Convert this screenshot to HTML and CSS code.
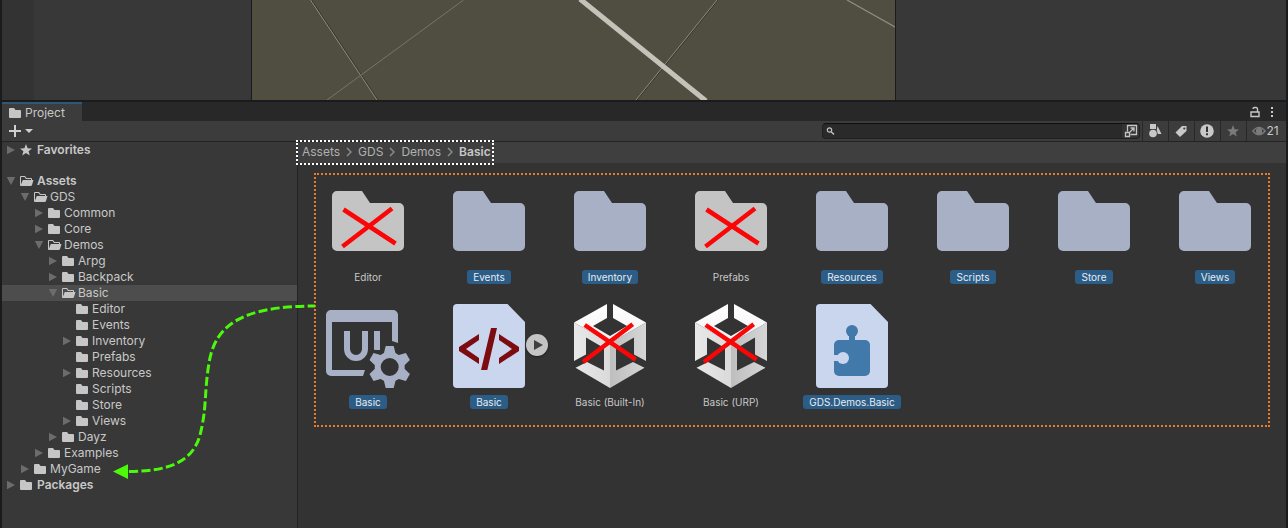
FILE: index.html
```html
<!DOCTYPE html>
<html lang="en">
<head>
<meta charset="utf-8">
<title>Project</title>
<link rel="stylesheet" href="styles.css">
</head>
<body>
<svg class="defs" aria-hidden="true">
  <defs>
    <linearGradient id="faceTop" x1="0" y1="0" x2="0" y2="1"><stop offset="0" stop-color="#fff"/><stop offset="1" stop-color="#f2f2f2"/></linearGradient>
    <linearGradient id="faceLeft" x1="0" y1="0" x2="1" y2="0"><stop offset="0" stop-color="#e8e8e8"/><stop offset="1" stop-color="#dadada"/></linearGradient>
    <linearGradient id="faceRight" x1="0" y1="0" x2="1" y2="0"><stop offset="0" stop-color="#bebebe"/><stop offset="1" stop-color="#d6d6d6"/></linearGradient>
  </defs>
  <symbol id="folder" viewBox="0 0 14 12"><path d="M0 2q0-1 1-1h4l1.500 2H11q1 0 1 1v6q0 1-1 1H1q-1 0-1-1z"/></symbol>
  <symbol id="folder-open" viewBox="0 0 14 12"><path d="M0 2q0-1 1-1h4l1.500 2H11q1 0 1 1v1h-1V4H6L4.500 2H1v7.500L2.800 5H13.500L12 10q-.300 1-1.300 1H1q-1 0-1-1z"/></symbol>
  <symbol id="closed" viewBox="0 0 10 10"><path d="M1 .8 9 5 1 9.200z"/></symbol>
  <symbol id="opened" viewBox="0 0 10 10"><path d="M.8 1h8.400L5 9z"/></symbol>
  <symbol id="star" viewBox="0 0 12 12"><path d="M6 0 7.600 4.200 12 4.400 8.600 7.200 9.800 11.600 6 9.100 2.200 11.600 3.400 7.200 0 4.400 4.400 4.200z"/></symbol>
  <symbol id="big-folder" viewBox="0 0 96 84"><path d="M17 12H42L50 24H79a5 5 0 0 1 5 5V67a5 5 0 0 1-5 5H17a5 5 0 0 1-5-5V17a5 5 0 0 1 5-5z"/></symbol>
  <symbol id="sheet" viewBox="0 0 96 84"><path d="M16 0H66.500L84 18V80a4 4 0 0 1-4 4H16a4 4 0 0 1-4-4V4a4 4 0 0 1 4-4z" fill="#cad6ee"/></symbol>
  <symbol id="cross" viewBox="0 0 96 84"><path d="M23.500 30.500 75.500 64.500M72 29.500 22.500 67.500" stroke="#fb0606" stroke-width="4.500"/></symbol>
  <symbol id="cube" viewBox="0 0 96 84">
    <path d="M12 18.500 48 39V84L13.500 63.700 25 58 42 66.500V44L24 33.500V50.500L12 57z" fill="url(#faceLeft)"/>
    <path d="M84 18.500 48 39V84L82.500 63.700 71 58 54 66.500V44L72 33.500V50.500L84 57z" fill="url(#faceRight)"/>
    <path d="M12 18.500 45 0V14L31 22 48 32 65 22 51 14V0L84 18.500 48 39z" fill="url(#faceTop)"/>
    <path d="M22.700 21 73.700 55.700M70.700 20.300 21 58" stroke="#fb0606" stroke-width="4.500"/>
  </symbol>
</svg>

<div class="editor">
  <section class="scene" aria-label="Scene">
    <div class="scene-left"></div>
    <svg class="viewport" viewBox="252 0 643 100" preserveAspectRatio="xMidYMid slice" fill="none">
      <path d="M311.500 0 378 100" stroke="#34332a" stroke-width="1"/>
      <path d="M310.500 0 377 100" stroke="#8e8b7e" stroke-width="1"/>
      <path d="M463.500 0 327 100" stroke="#77756b" stroke-width="1"/>
      <path d="M718 0 637 100" stroke="#34332a" stroke-width="1"/>
      <path d="M717 0 636 100" stroke="#8e8b7e" stroke-width="1"/>
      <path d="M580 -1 706 101" stroke="#c5c2b9" stroke-width="5"/>
      <path d="M847 0 896 27.500" stroke="#8e8b7e" stroke-width="1.300"/>
    </svg>
    <div class="scene-right"></div>
  </section>

  <header class="tabs">
    <button class="tab"><svg class="ico" width="14" height="12"><use href="#folder"/></svg>Project</button>
    <div class="tab-actions">
      <button aria-label="Lock"><svg width="12" height="12" fill="none" stroke="#c8c8c8"><path d="M2 6h8v4.500H2zM8.500 6V3q0-1.500-1.500-1.500H5.500Q4 1.500 4 3" stroke-width="1.400"/></svg></button>
      <button aria-label="Menu"><svg width="4" height="12" fill="#c8c8c8"><path d="M1 1h2v2H1zM1 5h2v2H1zM1 9h2v2H1z"/></svg></button>
    </div>
  </header>

  <div class="toolbar">
    <button class="add" aria-label="Create"><svg width="24" height="14" fill="#d0d0d0"><path d="M5 1h2v5h5v2H7v5H5V8H0V6h5zM16 5h8l-4 4z"/></svg></button>
    <div class="search">
      <svg width="10" height="10" fill="none" stroke="#c4c4c4"><circle cx="3.500" cy="4" r="2.200" stroke-width="1.200"/><path d="M5.200 5.700l2.800 2.800" stroke-width="1.400"/></svg>
      <input type="search" aria-label="Search">
      <button aria-label="Open in search window"><svg width="14" height="14" fill="none" stroke="#c4c4c4" stroke-width="1.300"><path d="M3.500 7.500V1.500H12.500V10.500H6.500M1.500 8.500h4v4h-4zM6 8l4-4M6.500 4H10V7.500"/></svg></button>
    </div>
    <button class="tool" aria-label="Filter by type"><svg width="16" height="16" fill="#c8c8c8"><path d="M3 1h6v5H3zM10.500 3l4 8H9z"/><circle cx="6" cy="10.500" r="4.600" fill="#3c3c3c"/><circle cx="6" cy="10.500" r="3.800"/></svg></button>
    <button class="tool" aria-label="Filter by label"><svg width="16" height="16"><path d="M9 3h4.500v5L7 14 2.500 9.500z" fill="#c8c8c8"/><circle cx="11.300" cy="5.500" r="1.100" fill="#3c3c3c"/></svg></button>
    <button class="tool" aria-label="Filter by import log"><svg width="16" height="16"><circle cx="8" cy="8" r="6.800" fill="#c8c8c8"/><path d="M7 3.500h2V9H7zM7 10.200h2v2H7z" fill="#333"/></svg></button>
    <button class="tool dim" aria-label="Save search"><svg width="12" height="12"><use href="#star"/></svg></button>
    <button class="tool hidden-count" aria-label="Hidden packages"><svg width="14" height="10" fill="none" stroke="#7b7b7b" stroke-width="1.200"><path d="M.8 5Q7-2.400 13.200 5 7 12.400.8 5z"/><circle cx="7" cy="5" r="2.600" fill="#7b7b7b"/></svg>21</button>
  </div>

  <main class="panes">
    <ul class="tree" role="tree">
      <li class="l0 root fav"><button aria-label="Expand"><svg><use href="#closed"/></svg></button><svg class="ico"><use href="#star"/></svg>Favorites</li>
      <li class="l0 root"><button aria-label="Collapse"><svg><use href="#opened"/></svg></button><svg class="ico"><use href="#folder-open"/></svg>Assets</li>
      <li class="l1"><button aria-label="Collapse"><svg><use href="#opened"/></svg></button><svg class="ico"><use href="#folder-open"/></svg>GDS</li>
      <li class="l2"><button aria-label="Expand"><svg><use href="#closed"/></svg></button><svg class="ico"><use href="#folder"/></svg>Common</li>
      <li class="l2"><button aria-label="Expand"><svg><use href="#closed"/></svg></button><svg class="ico"><use href="#folder"/></svg>Core</li>
      <li class="l2"><button aria-label="Collapse"><svg><use href="#opened"/></svg></button><svg class="ico"><use href="#folder-open"/></svg>Demos</li>
      <li class="l3"><button aria-label="Expand"><svg><use href="#closed"/></svg></button><svg class="ico"><use href="#folder"/></svg>Arpg</li>
      <li class="l3"><button aria-label="Expand"><svg><use href="#closed"/></svg></button><svg class="ico"><use href="#folder"/></svg>Backpack</li>
      <li class="l3 current"><button aria-label="Collapse"><svg><use href="#opened"/></svg></button><svg class="ico"><use href="#folder-open"/></svg>Basic</li>
      <li class="l4 leaf"><svg class="ico"><use href="#folder"/></svg>Editor</li>
      <li class="l4 leaf"><svg class="ico"><use href="#folder"/></svg>Events</li>
      <li class="l4"><button aria-label="Expand"><svg><use href="#closed"/></svg></button><svg class="ico"><use href="#folder"/></svg>Inventory</li>
      <li class="l4 leaf"><svg class="ico"><use href="#folder"/></svg>Prefabs</li>
      <li class="l4"><button aria-label="Expand"><svg><use href="#closed"/></svg></button><svg class="ico"><use href="#folder"/></svg>Resources</li>
      <li class="l4 leaf"><svg class="ico"><use href="#folder"/></svg>Scripts</li>
      <li class="l4 leaf"><svg class="ico"><use href="#folder"/></svg>Store</li>
      <li class="l4"><button aria-label="Expand"><svg><use href="#closed"/></svg></button><svg class="ico"><use href="#folder"/></svg>Views</li>
      <li class="l3"><button aria-label="Expand"><svg><use href="#closed"/></svg></button><svg class="ico"><use href="#folder"/></svg>Dayz</li>
      <li class="l2"><button aria-label="Expand"><svg><use href="#closed"/></svg></button><svg class="ico"><use href="#folder"/></svg>Examples</li>
      <li class="l1"><button aria-label="Expand"><svg><use href="#closed"/></svg></button><svg class="ico"><use href="#folder"/></svg>MyGame</li>
      <li class="l0 root"><button aria-label="Expand"><svg><use href="#closed"/></svg></button><svg class="ico"><use href="#folder"/></svg>Packages</li>
    </ul>

    <section class="content">
      <div class="crumb-bar">
        <nav class="crumbs" aria-label="Path">
          <a href="#assets">Assets</a><svg><path d="M1 1l4 4-4 4"/></svg>
          <a href="#gds">GDS</a><svg><path d="M1 1l4 4-4 4"/></svg>
          <a href="#demos">Demos</a><svg><path d="M1 1l4 4-4 4"/></svg>
          <a href="#basic" class="here">Basic</a>
        </nav>
      </div>
      <div class="grid">
        <figure class="tile grey"><svg class="art"><use href="#big-folder"/><use href="#cross"/></svg><figcaption>Editor</figcaption></figure>
        <figure class="tile picked"><svg class="art"><use href="#big-folder"/></svg><figcaption>Events</figcaption></figure>
        <figure class="tile picked"><svg class="art"><use href="#big-folder"/></svg><figcaption>Inventory</figcaption></figure>
        <figure class="tile grey"><svg class="art"><use href="#big-folder"/><use href="#cross"/></svg><figcaption>Prefabs</figcaption></figure>
        <figure class="tile picked"><svg class="art"><use href="#big-folder"/></svg><figcaption>Resources</figcaption></figure>
        <figure class="tile picked"><svg class="art"><use href="#big-folder"/></svg><figcaption>Scripts</figcaption></figure>
        <figure class="tile picked"><svg class="art"><use href="#big-folder"/></svg><figcaption>Store</figcaption></figure>
        <figure class="tile picked"><svg class="art"><use href="#big-folder"/></svg><figcaption>Views</figcaption></figure>

        <figure class="tile picked">
          <svg class="art" viewBox="0 0 96 84">
            <path fill-rule="evenodd" d="M11 6H73a5 5 0 0 1 5 5V39L72 37V18H12V66H45L43 72H11a5 5 0 0 1-5-5V11a5 5 0 0 1 5-5z"/>
            <path d="M27 27V45a9 9 0 0 0 18 0V27M57 27V46" fill="none" stroke="#a7b0c4" stroke-width="6"/>
            <g transform="translate(69.700 63)">
              <g fill="#333" stroke="#333" stroke-width="7" stroke-linejoin="round">
                <circle r="14"/>
                <path d="M-6-13-4-21H4L6-13zM8.300-11.700 16.200-14 20.200-7 14.300-1.300zM14.300 1.300 20.200 7 16.200 14 8.300 11.700zM6 13 4 21H-4L-6 13zM-8.300 11.700-16.200 14-20.200 7-14.300 1.300zM-14.300-1.300-20.200-7-16.200-14-8.300-11.700z"/>
              </g>
              <circle r="12" fill="none" stroke="#a7b0c4" stroke-width="6"/>
              <path d="M-6-13-4-21H4L6-13zM8.300-11.700 16.200-14 20.200-7 14.300-1.300zM14.300 1.300 20.200 7 16.200 14 8.300 11.700zM6 13 4 21H-4L-6 13zM-8.300 11.700-16.200 14-20.200 7-14.300 1.300zM-14.300-1.300-20.200-7-16.200-14-8.300-11.700z"/>
            </g>
          </svg>
          <figcaption>Basic</figcaption>
        </figure>
        <figure class="tile picked">
          <svg class="art" viewBox="0 0 96 84"><use href="#sheet"/><path fill="#7c0c10" d="M18 43 38 30V36L25 45 38 54V60L18 47zM78 43 58 30V36L71 45 58 54V60L78 47zM50 24H56L46.300 66H40z"/></svg>
          <button class="expand" aria-label="Expand"><svg width="22" height="22"><path d="M8 6v10l9-5z" fill="#404040"/></svg></button>
          <figcaption>Basic</figcaption>
        </figure>
        <figure class="tile"><svg class="art"><use href="#cube"/></svg><figcaption>Basic (Built-In)</figcaption></figure>
        <figure class="tile"><svg class="art"><use href="#cube"/></svg><figcaption>Basic (URP)</figcaption></figure>
        <figure class="tile picked">
          <svg class="art" viewBox="0 0 96 84"><use href="#sheet"/><g fill="#4179ab"><rect x="30" y="36" width="36" height="36" rx="5"/><circle cx="48" cy="27" r="6"/><path d="M45 30h6v7h-6z"/></g><path d="M29 51h8v6h-8z" fill="#cad6ee"/><circle cx="39" cy="54" r="6" fill="#cad6ee"/></svg>
          <figcaption>GDS.Demos.Basic</figcaption>
        </figure>
      </div>
    </section>
  </main>

  <svg class="arrow" width="320" height="200" viewBox="0 290 320 200" aria-hidden="true">
    <path d="M129 471.500C166 471 192 464 200 435 207 408 204 393 209 363 215 326 240 306 315 306" fill="none" stroke="#4cf80c" stroke-width="3" stroke-dasharray="9 3.400"/>
    <path d="M113 471.500 128 464.300V479z" fill="#4cf80c"/>
  </svg>
</div>
</body>
</html>
```
FILE: styles.css
```css
* { box-sizing: border-box; }

body {
  margin: 0;
  background: #1a1b1d;
  color: #c8c8c8;
  font: 12px/16px Inter, "Liberation Sans", sans-serif;
}

button {
  margin: 0;
  padding: 0;
  border: 0;
  background: none;
  color: inherit;
  font: inherit;
  display: flex;
  align-items: center;
  justify-content: center;
}

svg { display: block; flex: none; }

.defs { position: absolute; width: 0; height: 0; }

.editor {
  position: relative;
  display: flex;
  flex-direction: column;
  min-height: 100vh;
  padding: 0 2px;
}

/* Scene view */
.scene { display: flex; height: 100px; gap: 1px; }
.scene-left { flex: 249; background: #383838; box-shadow: inset 32px 0 #333; }
.viewport { flex: 643; min-width: 0; height: 100px; background: #504e41; }
.scene-right { flex: 390; background: #383838; }

/* Tab strip */
.tabs {
  display: flex;
  justify-content: space-between;
  height: 19px;
  margin-top: 2px;
  background: #282828;
}
.tab {
  gap: 2px;
  padding: 0 17px 0 7px;
  background: #3c3c3c;
  border-top: 2px solid #2f5778;
}
.ico { width: 14px; height: 12px; fill: #c6c6c6; }
.tab-actions { display: flex; align-items: center; gap: 9px; padding-right: 12px; }

/* Toolbar */
.toolbar {
  display: flex;
  align-items: center;
  height: 21px;
  background: #3c3c3c;
  border-bottom: 1px solid #232323;
}
.add { margin: 0 auto 0 7px; }
.search {
  display: flex;
  align-items: center;
  flex: 0 0 318px;
  height: 16px;
  margin-right: 2px;
  padding-left: 3px;
  background: #2a2a2a;
  border: 1px solid #212121;
  border-top-color: #111;
  border-radius: 4px;
}
.search input {
  flex: 1;
  min-width: 0;
  height: 14px;
  padding: 0 4px;
  border: 0;
  outline: 0;
  background: none;
  color: inherit;
  font: inherit;
}
.search button { width: 17px; height: 14px; background: #333; border-radius: 0 3px 3px 0; }
.tool { width: 26px; height: 20px; padding-right: 2px; border-left: 1px solid #282828; }
.dim { fill: #7b7b7b; }
.hidden-count { width: 40px; }

/* Folder tree */
.panes { display: flex; flex: 1; }
.tree {
  flex: 0 0 296px;
  margin: 0;
  padding: 0;
  list-style: none;
  background: #383838;
  border-right: 1px solid #232323;
}
.tree li { display: flex; align-items: center; height: 16px; padding-left: 4px; }
.tree button { width: 10px; height: 10px; margin-right: 4px; }
.tree button svg { width: 10px; height: 10px; fill: #6c6c6c; }
.tree .ico { margin-right: 2px; }
.tree .fav { margin-bottom: 15px; }
.tree .root { font-weight: 600; }
.tree .root .ico { margin-right: 3px; }
.tree .fav .ico { width: 12px; margin-right: 5px; }
.tree .leaf::before { content: ""; width: 14px; }
.tree .l1 { padding-left: 18px; }
.tree .l2 { padding-left: 32px; }
.tree .l3 { padding-left: 46px; }
.tree .l4 { padding-left: 60px; }
.tree .current { background: #4d4d4d; }

/* Folder contents */
.content { flex: 1; min-width: 0; background: #333; }
.crumb-bar { display: flex; height: 21px; background: #3f3f3f; }
.crumbs {
  display: flex;
  align-items: center;
  gap: 6px;
  padding: 0 1px 2px 4px;
  outline: 2px dotted #fff;
}
.crumbs a { color: #b0b0b0; text-decoration: none; }
.crumbs .here { color: #c8c8c8; font-weight: 600; }
.crumbs svg { width: 6px; height: 10px; fill: none; stroke: #8a8a8a; stroke-width: 1.5; }

.grid {
  display: grid;
  grid-template-columns: repeat(auto-fill, 96px);
  gap: 20px 25px;
  margin: 10px 16px;
  padding: 4px 4px 16px;
  border: 2px dotted #e87a30;
}
.tile {
  position: relative;
  display: flex;
  flex-direction: column;
  align-items: center;
  gap: 7px;
  margin: 0;
  fill: #a7b0c4;
}
.grey { fill: #c4c4c4; }
.art { width: 96px; height: 84px; }
.tile figcaption {
  padding: 0 6px;
  border-radius: 3px;
  font-size: 10px;
  line-height: 14px;
  white-space: nowrap;
}
.picked figcaption { background: #2c5d87; color: #e6ecf2; }
.expand {
  position: absolute;
  top: 30px;
  right: -11px;
  width: 22px;
  height: 22px;
  border-radius: 50%;
  background: #c4c4c4;
  box-shadow: 0 1px 2px #1c1c1c;
}

/* Move-to pointer over the panes */
.arrow { position: absolute; left: 0; top: 290px; pointer-events: none; }
```
